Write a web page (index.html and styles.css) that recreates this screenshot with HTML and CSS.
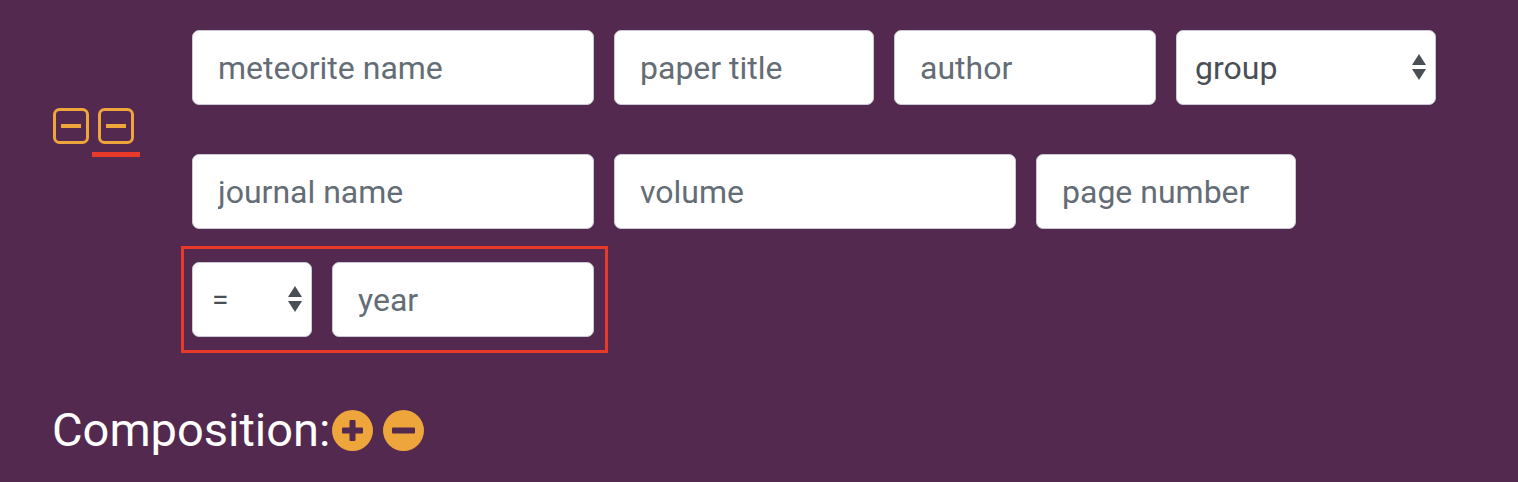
FILE: index.html
```html
<!DOCTYPE html>
<html lang="en">
<head>
<meta charset="utf-8">
<title>Search</title>
<link rel="stylesheet" href="styles.css">
</head>
<body>
<div class="page">
  <div class="top">
    <div class="toggles">
      <span class="sq-btn">
        <svg width="38" height="38" viewBox="0 0 38 38"><rect x="2.5" y="2.5" width="33" height="33" rx="5" fill="none" stroke="#eea53b" stroke-width="3"/><rect x="9" y="17" width="20" height="4" fill="#eea53b"/></svg>
      </span>
      <span class="sq-btn active">
        <svg width="38" height="38" viewBox="0 0 38 38"><rect x="2.5" y="2.5" width="33" height="33" rx="5" fill="none" stroke="#eea53b" stroke-width="3"/><rect x="9" y="17" width="20" height="4" fill="#eea53b"/></svg>
      </span>
    </div>
    <div class="form">
      <div class="row row-1">
        <input class="field w402" type="text" placeholder="meteorite name">
        <input class="field w260" type="text" placeholder="paper title">
        <input class="field w262" type="text" placeholder="author">
        <div class="select-wrap w260">
          <select class="select"><option>group</option></select>
          <svg class="arrows" width="14" height="26" viewBox="0 0 14 26"><path d="M7 0 L14 11 L0 11 Z" fill="#4a4f55"/><path d="M0 15 L14 15 L7 26 Z" fill="#4a4f55"/></svg>
        </div>
      </div>
      <div class="row row-2">
        <input class="field w402" type="text" placeholder="journal name">
        <input class="field w402" type="text" placeholder="volume">
        <input class="field w260" type="text" placeholder="page number">
      </div>
      <div class="row row-3">
        <div class="select-wrap w120">
          <select class="select small"><option>=</option></select>
          <svg class="arrows" width="14" height="26" viewBox="0 0 14 26"><path d="M7 0 L14 11 L0 11 Z" fill="#4a4f55"/><path d="M0 15 L14 15 L7 26 Z" fill="#4a4f55"/></svg>
        </div>
        <input class="field w262" type="text" placeholder="year">
      </div>
    </div>
  </div>
  <h2 class="heading">Composition:<span class="circ-btns"><svg width="41" height="41" viewBox="0 0 41 41"><circle cx="20.5" cy="20.5" r="20.5" fill="#eea53b"/><rect x="10" y="17.5" width="21" height="6" rx="1" fill="#53294f"/><rect x="17.5" y="10" width="6" height="21" rx="1" fill="#53294f"/></svg><svg width="41" height="41" viewBox="0 0 41 41"><circle cx="20.5" cy="20.5" r="20.5" fill="#eea53b"/><rect x="9" y="17.5" width="23" height="6" rx="1" fill="#53294f"/></svg></span></h2>
</div>
</body>
</html>
```

FILE: styles.css
```css
* { box-sizing: border-box; }
html, body {
  margin: 0;
  padding: 0;
  background: #53294f;
  font-family: Roboto, "Liberation Sans", sans-serif;
}
.page {
  padding: 30px 0 0 52px;
}
.top {
  display: flex;
}
.toggles {
  width: 140px;
  flex: none;
  display: flex;
  align-items: flex-start;
  gap: 7px;
  padding-top: 77px;
}
.sq-btn {
  display: flex;
  flex-direction: column;
  align-items: center;
  width: 38px;
  position: relative;
}
.sq-btn svg { display: block; }
.sq-btn.active::after {
  content: "";
  display: block;
  width: 48px;
  height: 5px;
  margin-top: 7px;
  background: #e8392a;
}
.form {
  display: flex;
  flex-direction: column;
}
.row {
  display: flex;
  gap: 20px;
}
.row-1 { margin-bottom: 49px; }
.row-2 { margin-bottom: 17px; }
.row-3 {
  align-self: flex-start;
  margin-left: -11px;
  border: 3px solid #e8392a;
  padding: 13px 11px 13px 8px;
}
.field {
  height: 75px;
  border: 1px solid #c9cbd3;
  border-radius: 7px;
  background: #fff;
  padding: 0 20px 0 25px;
  font-family: Roboto, "Liberation Sans", sans-serif;
  font-size: 32px;
  color: #495057;
  outline: none;
}
.field::placeholder { color: #646c75; opacity: 1; }
.w402 { width: 402px; }
.w260 { width: 260px; }
.w262 { width: 262px; }
.w120 { width: 120px; }
.select-wrap {
  position: relative;
  height: 75px;
}
.select {
  -webkit-appearance: none;
  appearance: none;
  width: 100%;
  height: 75px;
  border: 1px solid #c9cbd3;
  border-radius: 7px;
  background: #fff;
  padding: 0 40px 0 18px;
  font-family: Roboto, "Liberation Sans", sans-serif;
  font-size: 32px;
  color: #4a4f55;
  outline: none;
}
.select.small {
  font-size: 30px;
  padding-left: 19px;
}
.arrows {
  position: absolute;
  right: 10px;
  top: 24px;
  pointer-events: none;
}
.heading {
  margin: 51px 0 0;
  font-weight: 400;
  font-size: 47px;
  color: #fff;
  display: flex;
  align-items: center;
  line-height: 52px;
}
.circ-btns {
  display: inline-flex;
  gap: 10px;
  margin-left: 2px;
}
.circ-btns svg { display: block; }
```
